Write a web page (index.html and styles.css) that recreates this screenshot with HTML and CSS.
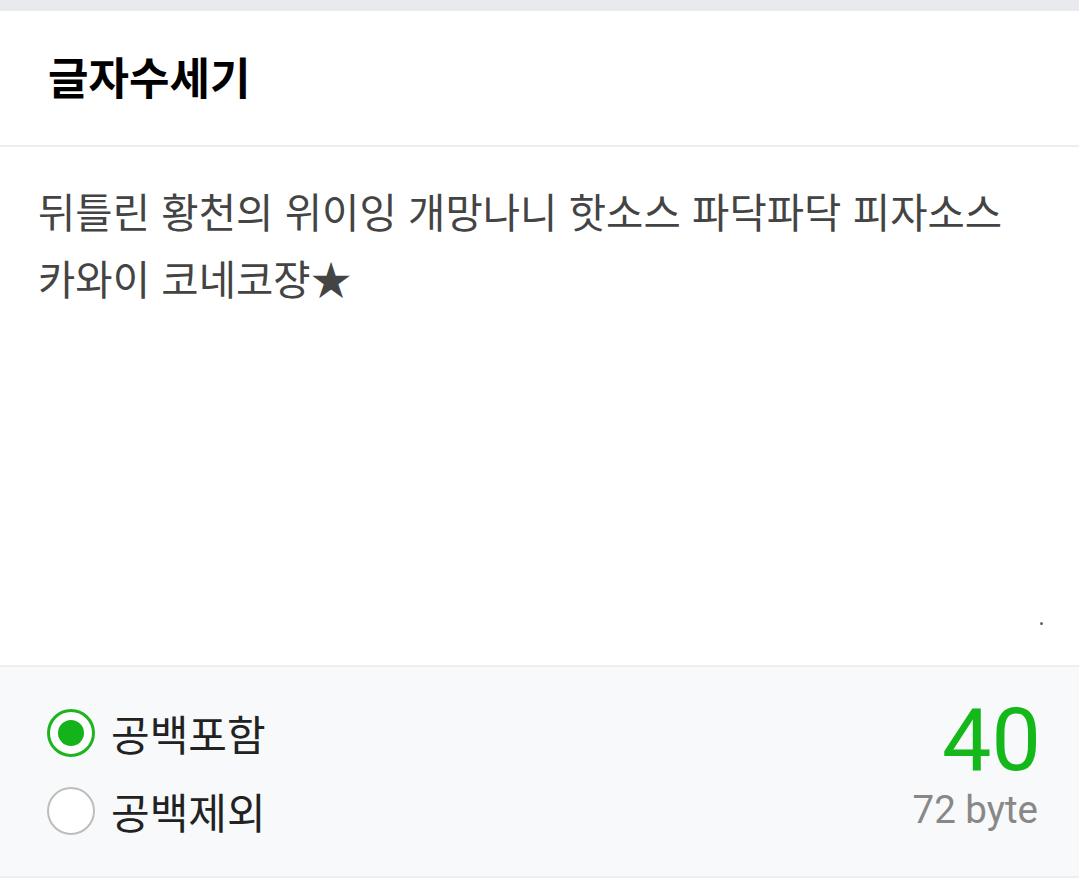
FILE: index.html
```html
<!DOCTYPE html>
<html lang="ko">
<head>
<meta charset="utf-8">
<link rel="stylesheet" href="styles.css">
</head>
<body>
<div class="topband"></div>
<header class="header"><h1 class="title">글자수세기</h1></header>
<main class="editor">
  <p class="content">뒤틀린 황천의 위이잉 개망나니 핫소스 파닥파닥 피자소스 카와이 코네코쟝★</p>
  <span class="grip"></span>
</main>
<section class="footer">
  <div class="options">
    <label class="option"><span class="radio radio-on"><span class="dot"></span></span><span class="label">공백포함</span></label>
    <label class="option"><span class="radio"></span><span class="label">공백제외</span></label>
  </div>
  <div class="counts">
    <div class="count">40</div>
    <div class="bytes">72 byte</div>
  </div>
</section>
<div class="bottom"></div>
</body>
</html>
```
FILE: styles.css
```css
html, body {
  margin: 0;
  padding: 0;
  background: #ffffff;
  font-family: Roboto, "Noto Sans CJK KR", sans-serif;
}
.topband {
  height: 11px;
  background: #e8eaed;
}
.header {
  height: 134px;
  display: flex;
  align-items: center;
  padding-left: 48px;
  border-bottom: 2px solid #eceef0;
}
.title {
  margin: 0;
  margin-top: -4px;
  font-family: "Noto Sans CJK KR", sans-serif;
  font-weight: 700;
  font-size: 44px;
  color: #000;
  line-height: 1;
}
.editor {
  position: relative;
  height: 518px;
  padding: 0 40px 0 38px;
  box-sizing: border-box;
}
.content {
  margin: 0;
  padding-top: 30px;
  font-family: "Noto Sans CJK KR", sans-serif;
  font-size: 40.6px;
  line-height: 67px;
  color: #444;
}
.grip {
  position: absolute;
  right: 36px;
  bottom: 40px;
  width: 3px;
  height: 3px;
  border-radius: 50%;
  background: #666;
}
.footer {
  border-top: 2px solid #eceef0;
  border-bottom: 2px solid #eceef0;
  background: #f8f9fa;
  height: 213px;
  box-sizing: border-box;
  display: flex;
  justify-content: space-between;
  align-items: center;
  padding: 0 41px 0 47px;
}
.options {
  display: flex;
  flex-direction: column;
  gap: 30px;
}
.option {
  display: flex;
  align-items: center;
  gap: 16px;
}
.radio {
  width: 48px;
  height: 48px;
  box-sizing: border-box;
  border-radius: 50%;
  border: 2px solid #bdbdbd;
  background: #fff;
  display: flex;
  align-items: center;
  justify-content: center;
}
.radio-on {
  border: 3px solid #1db41f;
  background: #fff;
}
.dot {
  width: 26px;
  height: 26px;
  border-radius: 50%;
  background: #14b31b;
}
.label {
  font-family: "Noto Sans CJK KR", sans-serif;
  font-size: 42px;
  line-height: 48px;
  color: #222;
}
.counts {
  display: flex;
  flex-direction: column;
  align-items: flex-end;
  margin-top: -16px;
}
.count {
  font-family: Roboto, sans-serif;
  font-size: 88px;
  line-height: 88px;
  color: #15b81b;
  margin-right: -3px;
}
.bytes {
  font-family: Roboto, sans-serif;
  font-size: 38.5px;
  line-height: 44px;
  color: #888;
  margin-top: 4px;
}
.bottom {
  height: 5px;
}
```
